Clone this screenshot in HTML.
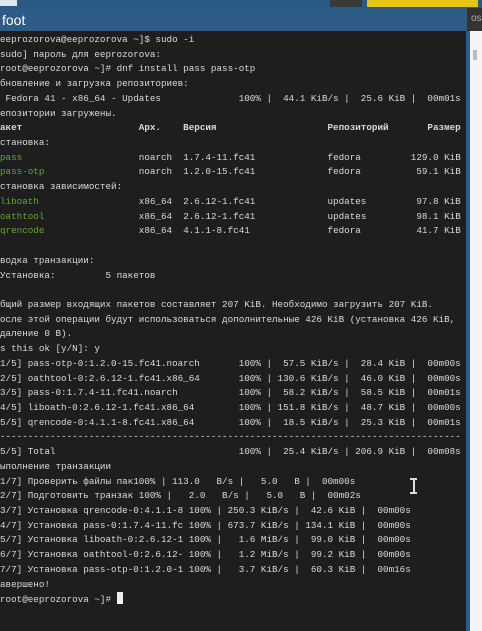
<!DOCTYPE html>
<html><head><meta charset="utf-8"><style>
html,body{margin:0;padding:0;width:482px;height:631px;overflow:hidden;background:#1e1e1e;position:relative}
.a{position:absolute}
pre{position:absolute;left:0;top:33px;margin:0;font-family:"Liberation Mono","DejaVu Sans Mono",monospace;font-size:9.25px;line-height:14.72px;color:#dadada;white-space:pre}
.g{color:#5fa830}.b{font-weight:bold}
.cur{display:inline-block;width:6px;height:12px;background:#eee;vertical-align:-2px}
</style></head><body>
<div class="a" style="left:0;top:0;width:482px;height:8px;background:#2a5a84"></div>
<div class="a" style="left:0;top:0;width:17px;height:6px;background:#dfe6ec"></div>
<div class="a" style="left:330px;top:0;width:32px;height:7px;background:#3a3a3a"></div>
<div class="a" style="left:367px;top:0;width:111px;height:7px;background:#e8c21a"></div>
<div class="a" style="left:0;top:8px;width:467px;height:23px;background:#2d5d86"></div>
<div class="a" style="left:2px;top:12px;font:14px 'Liberation Sans',sans-serif;color:#fff">foot</div>
<div class="a" style="left:467px;top:8px;width:15px;height:23px;background:#333"></div>
<div class="a" style="left:471px;top:13px;font:10px 'Liberation Sans',sans-serif;color:#aaa">os</div>
<div class="a" style="left:466px;top:31px;width:4px;height:600px;background:#2d5d86"></div>
<div class="a" style="left:470px;top:31px;width:12px;height:600px;background:#f4f4f4"></div>
<div class="a" style="left:473px;top:50px;width:4px;height:10px;background:#bbb"></div>
<pre>eeprozorova@eeprozorova ~]$ sudo -i
sudo] пароль для eeprozorova:
root@eeprozorova ~]# dnf install pass pass-otp
бновление и загрузка репозиториев:
 Fedora 41 - x86_64 - Updates              100% |  44.1 KiB/s |  25.6 KiB |  00m01s
епозитории загружены.
<span class="b">акет                     Арх.    Версия                    Репозиторий       Размер</span>
становка:
<span class="g">pass</span>                     noarch  1.7.4-11.fc41             fedora         129.0 KiB
<span class="g">pass-otp</span>                 noarch  1.2.0-15.fc41             fedora          59.1 KiB
становка зависимостей:
<span class="g">liboath</span>                  x86_64  2.6.12-1.fc41             updates         97.8 KiB
<span class="g">oathtool</span>                 x86_64  2.6.12-1.fc41             updates         98.1 KiB
<span class="g">qrencode</span>                 x86_64  4.1.1-8.fc41              fedora          41.7 KiB

водка транзакции:
Установка:         5 пакетов

бщий размер входящих пакетов составляет 207 KiB. Необходимо загрузить 207 KiB.
осле этой операции будут использоваться дополнительные 426 KiB (установка 426 KiB,
даление 0 B).
s this ok [y/N]: y
1/5] pass-otp-0:1.2.0-15.fc41.noarch       100% |  57.5 KiB/s |  28.4 KiB |  00m00s
2/5] oathtool-0:2.6.12-1.fc41.x86_64       100% | 130.6 KiB/s |  46.0 KiB |  00m00s
3/5] pass-0:1.7.4-11.fc41.noarch           100% |  58.2 KiB/s |  58.5 KiB |  00m01s
4/5] liboath-0:2.6.12-1.fc41.x86_64        100% | 151.8 KiB/s |  48.7 KiB |  00m00s
5/5] qrencode-0:4.1.1-8.fc41.x86_64        100% |  18.5 KiB/s |  25.3 KiB |  00m01s
-----------------------------------------------------------------------------------
5/5] Total                                 100% |  25.4 KiB/s | 206.9 KiB |  00m08s
ыполнение транзакции
1/7] Проверить файлы пак100% | 113.0   B/s |   5.0   B |  00m00s
2/7] Подготовить транзак 100% |   2.0   B/s |   5.0   B |  00m02s
3/7] Установка qrencode-0:4.1.1-8 100% | 250.3 KiB/s |  42.6 KiB |  00m00s
4/7] Установка pass-0:1.7.4-11.fc 100% | 673.7 KiB/s | 134.1 KiB |  00m00s
5/7] Установка liboath-0:2.6.12-1 100% |   1.6 MiB/s |  99.0 KiB |  00m00s
6/7] Установка oathtool-0:2.6.12- 100% |   1.2 MiB/s |  99.2 KiB |  00m00s
7/7] Установка pass-otp-0:1.2.0-1 100% |   3.7 KiB/s |  60.3 KiB |  00m16s
авершено!
root@eeprozorova ~]# <span class="cur"></span></pre>
<div class="a" style="left:410px;top:478px;width:7px;height:2px;background:#ddd"></div>
<div class="a" style="left:413px;top:478px;width:2px;height:16px;background:#ddd"></div>
<div class="a" style="left:410px;top:492px;width:7px;height:2px;background:#ddd"></div>
</body></html>
